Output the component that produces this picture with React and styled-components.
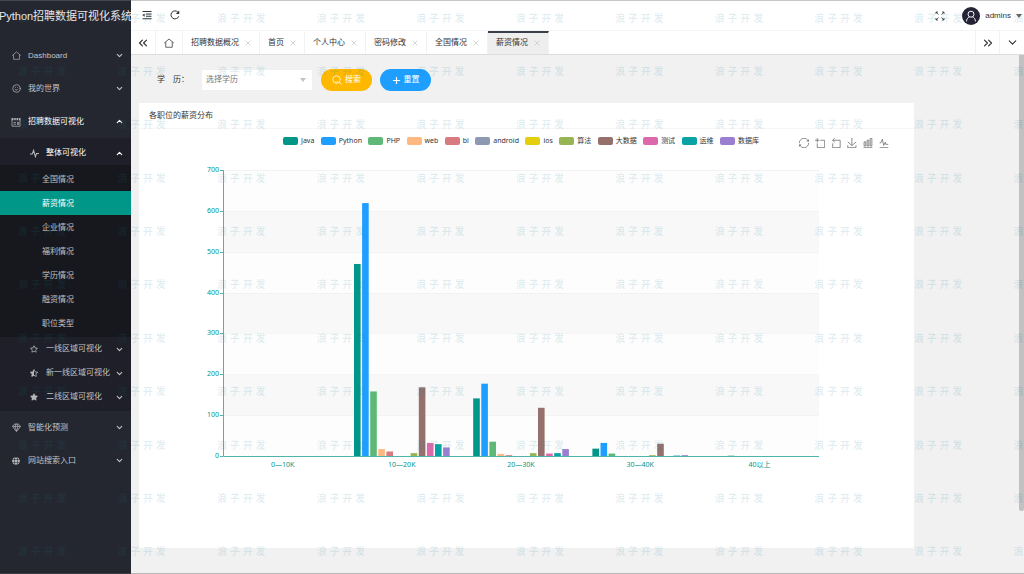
import React, {Component} from 'react';
import styled, {createGlobalStyle, css} from 'styled-components';
import {ChevronDown, ChevronUp, ChevronsLeft, ChevronsRight, Gem, Smile} from 'lucide-react';
import {FaStar, FaRegStar, FaStarHalfAlt, FaGlobe} from 'react-icons/fa';


const GlobalStyle = createGlobalStyle`
    * { box-sizing: border-box; }
    body {
        margin: 0;
        font-family: "Liberation Sans", "Noto Sans CJK SC", sans-serif;
        font-size: 8px;
        line-height: 12px;
        color: #333;
    }
    button, select { font: inherit; color: inherit; }
    button { border: 0; padding: 0; background: none; cursor: pointer; }
    a { color: inherit; text-decoration: none; }
    ul { list-style: none; margin: 0; padding: 0; }
    svg { display: block; flex: none; }
`;

const Layout = styled.div`
    position: relative;
    display: flex;
    min-height: 100vh;
    overflow: hidden;
    background: #f1f1f1;
`;

/* ---------- sidebar ---------- */

const Side = styled.aside`
    flex: none;
    width: 131px;
    background: #252730;
    color: #c2c3c6;
    border-top: 1px solid #45464d;
    border-bottom: 1px solid #3b3c43;
`;

const Logo = styled.h1`
    display: flex;
    justify-content: center;
    align-items: center;
    height: 30px;
    margin: 0 0 8px;
    font-size: 11px;
    font-weight: 400;
    white-space: nowrap;
    color: #e8e8ea;
`;

const MenuLink = styled.a`
    display: flex;
    align-items: center;
    height: ${p => (p.$sub ? 24 : 33)}px;
    padding: 0 7px 0 ${p => (p.$sub ? 29 : 11)}px;
    white-space: nowrap;
    color: ${p => (p.$open ? '#fff' : 'inherit')};

    span {
        flex: 1;
        margin-left: 7px;
    }
`;

const IconBox = styled.i`
    display: flex;
    justify-content: center;
    width: 10px;
    color: #b4b5b9;
`;

const SubMenu = styled.ul`
    padding: 3px 0 2px;
    background: #1e1f28;
`;

const LeafMenu = styled.ul`
    padding: 2px 0;
    background: #17181e;
`;

const Leaf = styled.a`
    display: flex;
    align-items: center;
    height: 24px;
    padding: 2px 0 0 42px;
    ${p => p.$active && css`
        background: #009688;
        color: #fff;
    `}
`;

/* ---------- header and tabs ---------- */

const Main = styled.div`
    flex: 1;
    min-width: 0;
    display: flex;
    flex-direction: column;
    border-top: 1px solid #c6c6c6;
    border-bottom: 1px solid #b9b9b9;
`;

const Header = styled.header`
    display: flex;
    align-items: center;
    height: 30px;
    padding: 0 2px 0 11px;
    background: #fff;
    border-bottom: 1px solid #f4f4f4;
`;

const HeaderTools = styled.div`
    display: flex;
    gap: 18px;
    margin-right: auto;
    padding-bottom: 2px;
`;

const User = styled.button`
    display: flex;
    align-items: center;
    gap: 5px;
    margin-left: 17px;
`;

const Avatar = styled.span`
    display: flex;
    align-items: center;
    justify-content: center;
    width: 18px;
    height: 18px;
    border-radius: 50%;
    background: #252436;
    color: #fff;
`;

const Caret = styled.span`
    border: solid transparent;
    border-width: 4px 3px 0;
    border-top-color: ${p => p.$color};
`;

const TabBar = styled.nav`
    display: flex;
    height: 24px;
    background: #fff;
    border-bottom: 1px solid #dcdcdc;
`;

const TabControl = styled.button`
    display: flex;
    align-items: center;
    justify-content: center;
    width: ${p => p.$width}px;
    border-right: 1px solid #f2f2f2;
    ${p => p.$right && css`
        border-right: 0;
        border-left: 1px solid #f2f2f2;
    `}
`;

const TabList = styled.div`
    display: flex;
    flex: 1;
    min-width: 0;
`;

const Tab = styled.div`
    display: flex;
    align-items: center;
    gap: 6px;
    padding: 0 8px 2px;
    border-right: 1px solid #f2f2f2;
    border-top: 2px solid transparent;
    white-space: nowrap;
    ${p => p.$active && css`
        background: #eee;
        border-top-color: #3a404b;
    `}
`;

const CloseButton = styled.button`
    color: #c8c8c8;
`;

/* ---------- page ---------- */

const Content = styled.div`
    display: flex;
    flex: 1;
`;

const Page = styled.main`
    flex: 1;
    min-width: 0;
    padding: 14px 105px 25px 8px;
`;

const ScrollTrack = styled.div`
    display: flex;
    flex-direction: column;
    width: 5px;
`;

const ScrollThumb = styled.div`
    height: 88%;
    background: #c1c1c1;
    border-radius: 0 0 2px 2px;
`;

const SearchForm = styled.form`
    display: flex;
    align-items: center;
    gap: 8px;
    margin-bottom: 12px;
    padding-left: 18px;
`;

const Label = styled.label`
    width: 36px;
    white-space: pre;
`;

const SelectWrap = styled.div`
    display: flex;
    align-items: center;
    width: 112px;
    height: 22px;
    padding-right: 6px;
    background: #fff;
    border: 1px solid #f0f0f0;

    select {
        flex: 1;
        height: 20px;
        padding: 0 4px;
        border: 0;
        background: none;
        appearance: none;
        color: #777;
    }
`;

const RoundButton = styled.button`
    display: flex;
    align-items: center;
    justify-content: center;
    gap: 3px;
    width: 51px;
    height: 22px;
    border-radius: 11px;
    background: ${p => p.$color};
    color: #fff;
`;

const Card = styled.section`
    background: #fff;
`;

const CardTitle = styled.h2`
    display: flex;
    align-items: center;
    height: 26px;
    margin: 0;
    padding-left: 10px;
    border-bottom: 1px solid #f6f6f6;
    font-size: 8px;
    font-weight: 400;
`;

const ChartTop = styled.div`
    display: flex;
    justify-content: space-between;
    align-items: flex-start;
    height: 26px;
    padding: 6px 25px 0 144px;
    font-family: "Noto Sans", "Noto Sans CJK SC", sans-serif;
    font-size: 7px;
`;

const Legend = styled.ul`
    display: flex;
    justify-content: space-between;
    width: 476px;

    li {
        display: flex;
        align-items: center;
        gap: 3px;
        white-space: nowrap;
    }
`;

const Swatch = styled.span`
    width: 15px;
    height: 8px;
    border-radius: 2px;
    background: ${p => p.$color};
`;

const Toolbox = styled.div`
    display: flex;
    gap: 6px;
    padding-top: 3px;
`;

const Plot = styled.svg`
    width: 100%;
    font-family: "Noto Sans", "Noto Sans CJK SC", sans-serif;
    font-size: 7px;
    fill: #009688;
`;

const Watermark = styled.div`
    position: absolute;
    inset: -8px -89px -5px 18px;
    display: grid;
    grid-template-columns: repeat(11, 1fr);
    grid-template-rows: repeat(11, 1fr);
    align-items: center;
    pointer-events: none;
    font-size: 10px;
    font-weight: 700;
    white-space: nowrap;
    color: rgba(20, 125, 150, 0.12);
`;

/* ---------- icons ---------- */

const Stroke = ({size = 10, box = 20, width = 1.5, children}) => (
    <svg width={size} height={size} viewBox={`0 0 ${box} ${box}`} fill="none" stroke="currentColor" strokeWidth={width}>
        {children}
    </svg>
);

const HomeIcon = ({size}) => (
    <Stroke size={size}><path d="M.5 10 10 2l9.500 8M3.500 8v10.500h13V8" /></Stroke>
);

const BoardIcon = () => (
    <Stroke>
        <path d="M2 6v12.500h16V6M5 11h5M5 14.500h5M13 10.500h2.500v4.500H13z" />
        <path d="M1 4h4M6.500 4h3M11 4h3M15.500 4H19" strokeWidth="4.500" />
    </Stroke>
);

const PulseIcon = () => (
    <Stroke size={9} width={2.4}><path d="M0 11h5l3-8 4 14 2.500-7H20" /></Stroke>
);

const IndentIcon = () => (
    <Stroke width={2}><path d="M1 3h18M8 8h11M8 12.500h11M1 17.500h18" /><path d="M1 10.200 5 7.500v5.500z" fill="currentColor" strokeWidth="0.500" /></Stroke>
);

const RefreshIcon = () => (
    <Stroke width={2}><path d="M17.500 12.500A8 8 0 1 1 16 4.500" /><path d="M18.500 1v7h-7z" fill="currentColor" strokeWidth="0" /></Stroke>
);

const FullIcon = () => (
    <Stroke width={1.6}>
        <path d="M2 6V2h4M2 2l5 5M14 2h4v4M18 2l-5 5M2 14v4h4M2 18l5-5M14 18h4v-4M18 18l-5-5" />
    </Stroke>
);

const UserIcon = () => (
    <Stroke size={12} width={1.6}><circle cx="10" cy="7" r="5" /><path d="M2.500 19c0-4 3-7 5-7.500M17.500 19c0-4-3-7-5-7.500" /></Stroke>
);

const SearchIcon = () => (
    <Stroke><circle cx="9" cy="9" r="7.500" /><path d="m14 14 5.500 5M6 13.500c1.500 1 4 1 5.500 0" /></Stroke>
);

const PlusIcon = () => (
    <Stroke size={9} width={2.6}><path d="M10 2v16M2 10h16" /></Stroke>
);

const CloseIcon = () => (
    <Stroke size={6} width={2.5}><path d="m2 2 16 16M18 2 2 18" /></Stroke>
);

const Chevron = ({open}) => (open ? <ChevronUp size={9} strokeWidth={3} /> : <ChevronDown size={9} strokeWidth={3} />);

/* ---------- data ---------- */

const MENU = [
    {text: 'Dashboard', icon: <HomeIcon size={9} />},
    {text: '我的世界', icon: <Smile size={9} />},
    {text: '招聘数据可视化', icon: <BoardIcon />, children: [
        {text: '整体可视化', icon: <PulseIcon />, children: ['全国情况', '薪资情况', '企业情况', '福利情况', '学历情况', '融资情况', '职位类型']},
        {text: '一线区域可视化', icon: <FaRegStar size={8} />},
        {text: '新一线区域可视化', icon: <FaStarHalfAlt size={8} />},
        {text: '二线区域可视化', icon: <FaStar size={8} />},
    ]},
    {text: '智能化预测', icon: <Gem size={9} />},
    {text: '网站搜索入口', icon: <FaGlobe size={8} />},
];

const TABS = ['招聘数据概况', '首页', '个人中心', '密码修改', '全国情况', '薪资情况'];
const CURRENT = '薪资情况';

const SERIES = [
    {name: 'Java', color: '#009688', data: [0, 470, 141, 18, 0]},
    {name: 'Python', color: '#1e9fff', data: [0, 619, 177, 32, 0]},
    {name: 'PHP', color: '#5fb878', data: [0, 158, 35, 6, 1]},
    {name: 'web', color: '#ffb980', data: [0, 17, 5, 0, 0]},
    {name: 'bi', color: '#d87a80', data: [0, 11, 2, 0, 0]},
    {name: 'android', color: '#8d98b3', data: [0, 0, 0, 0, 0]},
    {name: 'ios', color: '#e5cf0d', data: [0, 0, 0, 0, 0]},
    {name: '算法', color: '#97b552', data: [0, 7, 7, 2, 0]},
    {name: '大数据', color: '#95706d', data: [0, 168, 118, 30, 0]},
    {name: '测试', color: '#dc69aa', data: [0, 32, 6, 0, 0]},
    {name: '运维', color: '#07a2a4', data: [0, 29, 7, 1, 0]},
    {name: '数据库', color: '#9a7fd1', data: [0, 21, 17, 2, 0]},
];

const RANGES = ['0—10K', '10—20K', '20—30K', '30—40K', '40以上'];

const TOOLS = [
    ['还原', 'M47 18.900h9.800V8.700M56.300 20.100C52.100 9 40.500.600 26.800 2.100 12.600 3.700 1.600 16.200 2.100 30.600M13 41.100H3.100v10.200M3.700 39.900c4.200 11.100 15.800 19.500 29.500 18 14.200-1.600 25.200-14.100 24.700-28.500'],
    ['区域缩放', 'M0 13.500h26.900M13.500 26.900V0M32.100 13.500H58V58H13.500V32.100'],
    ['缩放还原', 'M22 1.400 9.900 13.500l12.300 12.300M10.300 13.500h44.600v44.600H10.300v-26'],
    ['保存图片', 'M4.700 22.900 29.300 45.500 54.700 23.400M4.600 43.600V58h49.200V43.600M29.200 45.100V0'],
    ['柱状图', 'M6.700 22.900h10V48h-10zM24.900 13h10v35h-10zM43.200 2h10v46h-10zM3.100 58h53.700'],
    ['折线图', 'M4.100 28.900h7.100l9.300-22 7.400 38 9.700-19.700 3 12.800h14.900M4.100 58h51.400'],
];

/* ---------- components ---------- */

class SideMenu extends Component {

    renderGroup = (item) => {
        return (
            <li key={item.text}>
                <MenuLink href="#" $sub $open={!!item.children}>
                    <IconBox>{item.icon}</IconBox>
                    <span>{item.text}</span>
                    <Chevron open={!!item.children} />
                </MenuLink>
                {item.children && (
                    <LeafMenu>
                        {item.children.map(text => (
                            <li key={text}><Leaf href="#" $active={text === CURRENT}>{text}</Leaf></li>
                        ))}
                    </LeafMenu>
                )}
            </li>
        )
    }

    render() {
        return (
            <Side>
                <Logo>Python招聘数据可视化系统</Logo>
                <ul>
                    {MENU.map(item => (
                        <li key={item.text}>
                            <MenuLink href="#" $open={!!item.children}>
                                <IconBox>{item.icon}</IconBox>
                                <span>{item.text}</span>
                                <Chevron open={!!item.children} />
                            </MenuLink>
                            {item.children && <SubMenu>{item.children.map(this.renderGroup)}</SubMenu>}
                        </li>
                    ))}
                </ul>
            </Side>
        )
    }
}

class SalaryChart extends Component {

    // plot box inside the svg
    left = 84
    right = 680
    top = 15
    bottom = 301
    max = 700

    y = (value) => this.bottom - (value / this.max) * (this.bottom - this.top)

    render() {
        const band = (this.right - this.left) / RANGES.length;
        const ticks = [0, 100, 200, 300, 400, 500, 600, 700];

        return (
            <Plot viewBox="0 0 775 393" role="img" aria-label="各职位的薪资分布">
                {ticks.slice(1).map((t, i) => (
                    <g key={t}>
                        <rect x={this.left} y={this.y(t)} width={this.right - this.left} height={this.y(0) - this.y(100)} fill={i % 2 ? '#f8f8f8' : '#fdfdfd'} />
                        <path d={`M${this.left} ${Math.round(this.y(t)) + 0.5}H${this.right}`} stroke="#f2f2f2" />
                    </g>
                ))}
                {SERIES.map((s, i) => s.data.map((value, k) => value > 0 && (
                    <rect key={s.name + k} x={this.left + band * k + 11.8 + i * 8.1} y={this.y(value)} width={6.6} height={this.bottom - this.y(value)} fill={s.color} />
                )))}
                {ticks.map(t => (
                    <g key={t}>
                        <path d={`M${this.left - 3} ${Math.round(this.y(t)) + 0.5}h3`} stroke="#4db5ab" />
                        <text x={this.left - 4} y={this.y(t) + 2} textAnchor="end">{t}</text>
                    </g>
                ))}
                <path d={`M${this.left + 0.5} ${this.top}V${this.bottom + 0.5}H${this.right}`} fill="none" stroke="#4db5ab" />
                {RANGES.map((r, k) => (
                    <text key={r} x={this.left + band * (k + 0.5)} y={this.bottom + 11} textAnchor="middle">{r}</text>
                ))}
            </Plot>
        )
    }
}

class App extends Component {

    render() {
        return (
            <Layout>
                <GlobalStyle />
                <SideMenu />
                <Main>
                    <Header>
                        <HeaderTools>
                            <button type="button" aria-label="收起菜单"><IndentIcon /></button>
                            <button type="button" aria-label="刷新"><RefreshIcon /></button>
                        </HeaderTools>
                        <button type="button" aria-label="全屏"><FullIcon /></button>
                        <User type="button">
                            <Avatar><UserIcon /></Avatar>
                            admins
                            <Caret $color="#666" />
                        </User>
                    </Header>
                    <TabBar>
                        <TabControl type="button" $width={25} aria-label="向左"><ChevronsLeft size={14} /></TabControl>
                        <TabControl type="button" $width={27} aria-label="主页"><HomeIcon size={10} /></TabControl>
                        <TabList>
                            {TABS.map(text => (
                                <Tab key={text} $active={text === CURRENT}>
                                    <a href="#">{text}</a>
                                    <CloseButton type="button" aria-label={`关闭${text}`}><CloseIcon /></CloseButton>
                                </Tab>
                            ))}
                        </TabList>
                        <TabControl type="button" $width={24} $right aria-label="向右"><ChevronsRight size={14} /></TabControl>
                        <TabControl type="button" $width={25} $right aria-label="更多"><ChevronDown size={13} /></TabControl>
                    </TabBar>
                    <Content>
                        <Page>
                            <SearchForm onSubmit={e => e.preventDefault()}>
                                <Label htmlFor="degree">{'学\u2003历：'}</Label>
                                <SelectWrap>
                                    <select id="degree" defaultValue="">
                                        <option value="">选择学历</option>
                                    </select>
                                    <Caret $color="#c2c2c2" />
                                </SelectWrap>
                                <RoundButton type="submit" $color="#ffb800"><SearchIcon />搜索</RoundButton>
                                <RoundButton type="reset" $color="#1e9fff"><PlusIcon />重置</RoundButton>
                            </SearchForm>
                            <Card>
                                <CardTitle>各职位的薪资分布</CardTitle>
                                <ChartTop>
                                    <Legend>
                                        {SERIES.map(s => (
                                            <li key={s.name}><Swatch $color={s.color} />{s.name}</li>
                                        ))}
                                    </Legend>
                                    <Toolbox>
                                        {TOOLS.map(([name, d]) => (
                                            <button key={name} type="button" aria-label={name}>
                                                <Stroke box={60} width={4.5}><path d={d} stroke="#666" /></Stroke>
                                            </button>
                                        ))}
                                    </Toolbox>
                                </ChartTop>
                                <SalaryChart />
                            </Card>
                        </Page>
                        <ScrollTrack><ScrollThumb /></ScrollTrack>
                    </Content>
                </Main>
                <Watermark aria-hidden="true">
                    {Array.from({length: 121}, (_, i) => <span key={i}>浪 子 开 发</span>)}
                </Watermark>
            </Layout>
        )
    }
}

export default App;
